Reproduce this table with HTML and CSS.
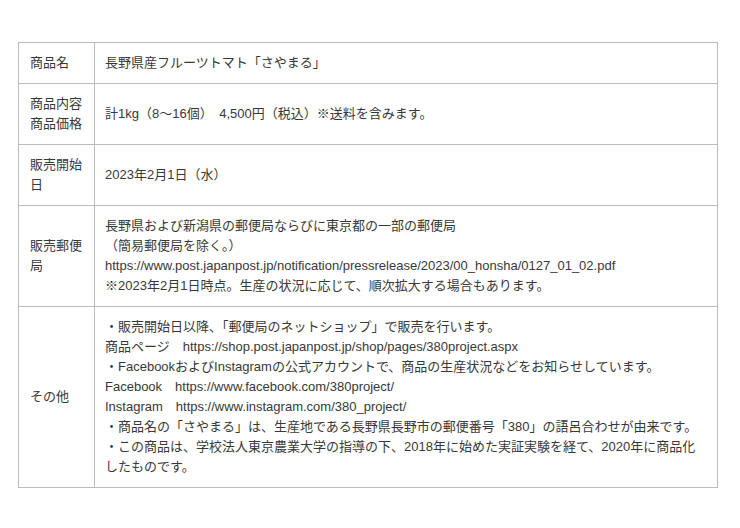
FILE: index.html
```html
<!DOCTYPE html>
<html lang="ja">
<head>
    <meta charset="UTF-8">
    <meta name="viewport" content="width=device-width, initial-scale=1.0">
    <title>長野県産フルーツトマト「さやまる」</title>
    <link rel="stylesheet" href="styles.css">
</head>
<body>
    <main class="page">
        <table class="spec-table">
            <tr>
                <th>商品名</th>
                <td>長野県産フルーツトマト「さやまる」</td>
            </tr>
            <tr>
                <th>商品内容<br>商品価格</th>
                <td>計1kg（8〜16個）　4,500円（税込）※送料を含みます。</td>
            </tr>
            <tr>
                <th>販売開始日</th>
                <td>2023年2月1日（水）</td>
            </tr>
            <tr>
                <th>販売郵便局</th>
                <td>長野県および新潟県の郵便局ならびに東京都の一部の郵便局<br>（簡易郵便局を除く。）<br>https://www.post.japanpost.jp/notification/pressrelease/2023/00_honsha/0127_01_02.pdf<br>※2023年2月1日時点。生産の状況に応じて、順次拡大する場合もあります。</td>
            </tr>
            <tr>
                <th>その他</th>
                <td>・販売開始日以降、「郵便局のネットショップ」で販売を行います。<br>商品ページ　https://shop.post.japanpost.jp/shop/pages/380project.aspx<br>・FacebookおよびInstagramの公式アカウントで、商品の生産状況などをお知らせしています。<br>Facebook　https://www.facebook.com/380project/<br>Instagram　https://www.instagram.com/380_project/<br>・商品名の「さやまる」は、生産地である長野県長野市の郵便番号「380」の語呂合わせが由来です。<br>・この商品は、学校法人東京農業大学の指導の下、2018年に始めた実証実験を経て、2020年に商品化したものです。</td>
            </tr>
        </table>
    </main>
</body>
</html>
```

FILE: styles.css
```css
body {
    margin: 0;
    padding: 0;
    background-color: #fff;
    color: #383838;
    font-family: "Liberation Sans", "Noto Sans CJK JP", sans-serif;
    font-size: 13px;
    line-height: 20px;
}
.page {
    padding: 42px 22px 0 18px;
}
.spec-table {
    width: 700px;
    border-collapse: collapse;
}
.spec-table th,
.spec-table td {
    border: 1px solid #bbb;
    padding: 10px 11px;
    text-align: left;
    vertical-align: middle;
    font-weight: normal;
}
.spec-table th {
    width: 53px;
}
.spec-table td {
    padding-left: 10px;
}
```
